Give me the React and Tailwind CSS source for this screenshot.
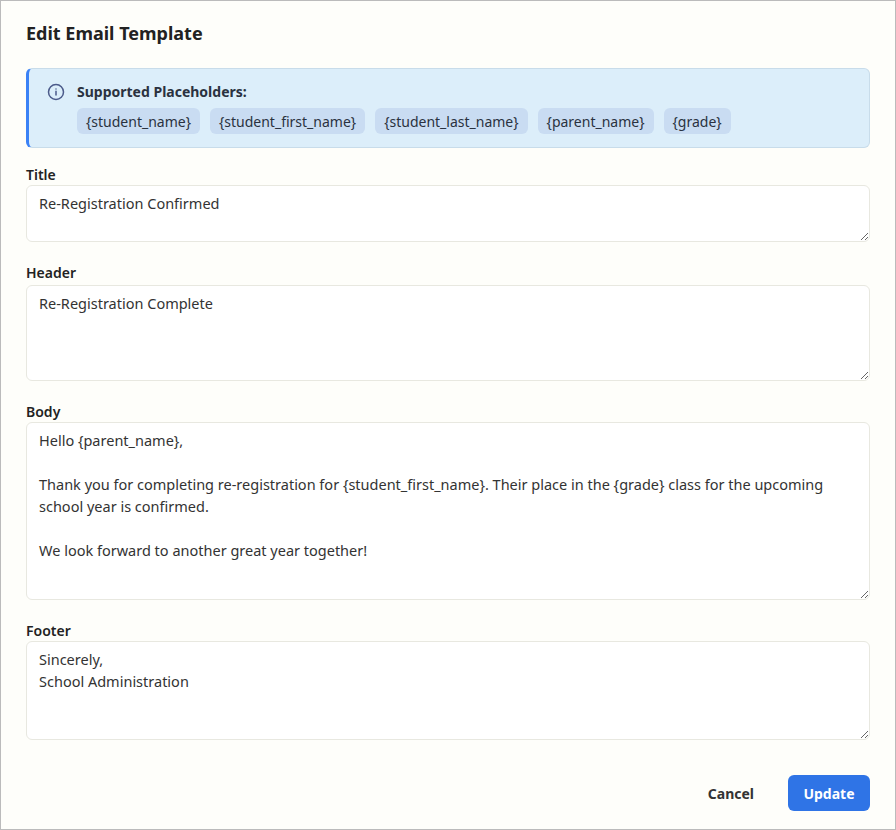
export default function App() {
  const chips = ["{student_name}", "{student_first_name}", "{student_last_name}", "{parent_name}", "{grade}"];
  const ta = "w-full resize-y rounded-md border border-[#e8e8e0] bg-white px-3 pt-[6px] pb-[9px] text-[14.5px] leading-[22px] text-[#333] outline-none";
  const lbl = "text-[14px] font-semibold text-[#222] h-[22px] flex items-center";
  return (
    <div className="w-[896px] h-[830px] bg-[#fefefa] border border-[#bbb] font-['Lato',sans-serif] text-[#222] box-border">
      <div className="px-[25px] pt-[19px]">
        <h1 className="text-[18px] font-bold text-[#222] h-[26px] leading-[26px]">Edit Email Template</h1>
        <div className="mt-[22px] h-[80px] rounded-md border border-[#c8dcea] border-l-[3px] border-l-[#3b82f6] bg-[#dceefa] pl-[18px] pt-[12px]">
          <div className="flex items-center gap-[12px]">
            <svg width="18" height="18" viewBox="0 0 24 24" fill="none" stroke="#4b5a8a" strokeWidth="2"><circle cx="12" cy="12" r="10"/><path d="M12 16v-5M12 8h.01" strokeLinecap="round"/></svg>
            <span className="text-[14px] font-bold text-[#2a3240]">Supported Placeholders:</span>
          </div>
          <div className="flex gap-[10px] ml-[30px] mt-[6px]">
            {chips.map(c => <span key={c} className="rounded-md bg-[#c9dcf2] px-[9px] h-[26px] flex items-center text-[14px] text-[#2a3240]">{c}</span>)}
          </div>
        </div>
        <div className="mt-[15px] flex flex-col">
          <div className={lbl}>Title</div>
          <textarea className={ta + " h-[57px]"} defaultValue="Re-Registration Confirmed" />
          <div className={lbl + " mt-[19px]"}>Header</div>
          <textarea className={ta + " h-[96px] mt-[2px]"} defaultValue="Re-Registration Complete" />
          <div className={lbl + " mt-[19px]"}>Body</div>
          <textarea className={ta + " h-[178px]"} defaultValue={"Hello {parent_name},\n\nThank you for completing re-registration for {student_first_name}. Their place in the {grade} class for the upcoming school year is confirmed.\n\nWe look forward to another great year together!"} />
          <div className={lbl + " mt-[19px]"}>Footer</div>
          <textarea className={ta + " h-[99px]"} defaultValue={"Sincerely,\nSchool Administration"} />
        </div>
        <div className="flex justify-end items-center gap-[12px] mt-[35px]">
          <button className="h-[36px] px-[22px] text-[14px] font-bold text-[#333]">Cancel</button>
          <button className="h-[36px] w-[82px] rounded-md bg-[#2f74e6] text-[14px] font-bold text-white">Update</button>
        </div>
      </div>
    </div>
  );
}
